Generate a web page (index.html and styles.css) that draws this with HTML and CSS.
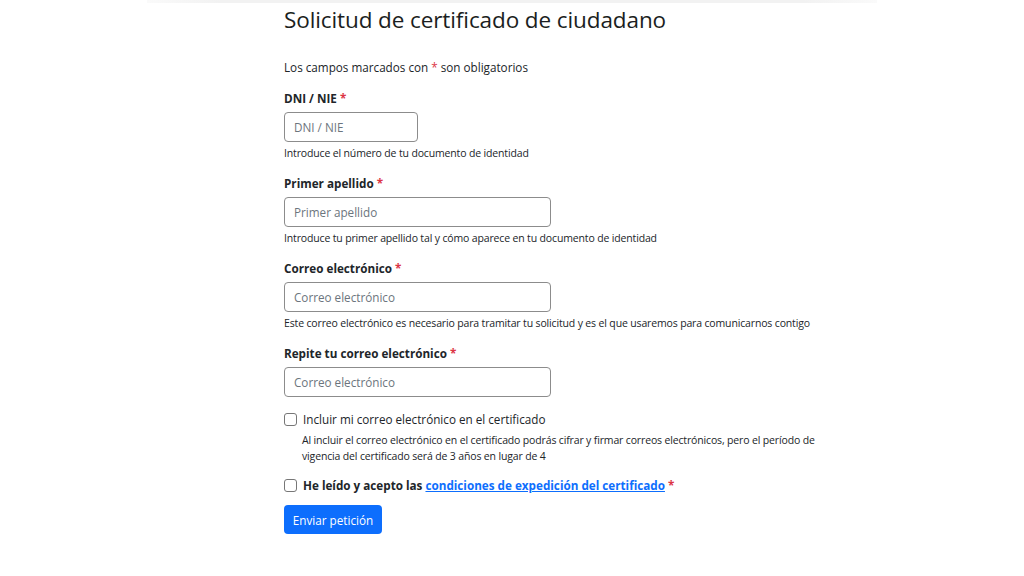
FILE: index.html
```html
<!DOCTYPE html>
<html lang="es">
<head>
  <meta charset="UTF-8" />
  <meta name="viewport" content="width=device-width, initial-scale=1.0">
  <title>Solicitud de certificado de ciudadano</title>
  <link rel="stylesheet" href="styles.css">
</head>
<body>

  <div class="top-band"></div>

  <div class="container">
    <div class="form-wrap">
      <h1>Solicitud de certificado de ciudadano</h1>

      <p class="required-note">Los campos marcados con <span class="star">*</span> son obligatorios</p>

      <!-- DNI -->
      <div class="field">
        <label for="dni">DNI / NIE <span class="star">*</span></label>
        <input type="text" id="dni" class="input-short" placeholder="DNI / NIE" />
        <div class="help">Introduce el número de tu documento de identidad</div>
      </div>

      <!-- Apellido -->
      <div class="field">
        <label for="apellido">Primer apellido <span class="star">*</span></label>
        <input type="text" id="apellido" placeholder="Primer apellido" />
        <div class="help">Introduce tu primer apellido tal y cómo aparece en tu documento de identidad</div>
      </div>

      <!-- Correo -->
      <div class="field">
        <label for="email">Correo electrónico <span class="star">*</span></label>
        <input type="email" id="email" placeholder="Correo electrónico" />
        <div class="help">Este correo electrónico es necesario para tramitar tu solicitud y es el que usaremos para comunicarnos contigo</div>
      </div>

      <div class="field">
        <label for="email2">Repite tu correo electrónico <span class="star">*</span></label>
        <input type="email" id="email2" placeholder="Correo electrónico" />
      </div>

      <!-- Casillas -->
      <div class="check">
        <input type="checkbox" id="incluir" />
        <label for="incluir">Incluir mi correo electrónico en el certificado</label>
      </div>
      <div class="check-help">
        Al incluir el correo electrónico en el certificado podrás cifrar y firmar correos electrónicos, pero el período de
        vigencia del certificado será de 3 años en lugar de 4
      </div>

      <div class="check check-bold">
        <input type="checkbox" id="acepto" />
        <label for="acepto">He leído y acepto las <a href="#">condiciones de expedición del certificado</a> <span class="star">*</span></label>
      </div>

      <button type="submit" class="btn-send">Enviar petición</button>
    </div>
  </div>

</body>
</html>
```

FILE: styles.css
```css
* {
  box-sizing: border-box;
}

body {
  margin: 0;
  font-family: "Open Sans", "Noto Sans", sans-serif;
  font-size: 11.7px;
  color: #212529;
  background-color: #fff;
}

.top-band {
  width: 730px;
  height: 3px;
  margin: 0 auto;
  background: linear-gradient(to right, #fafafa, #f2f2f2 10%, #f2f2f2 90%, #fafafa);
}

.container {
  width: 730px;
  margin: 0 auto;
}

.form-wrap {
  margin-left: 137px;
  width: 560px;
}

h1 {
  margin: 2px 0 0;
  font-size: 22.5px;
  font-weight: 500;
  line-height: 30px;
  letter-spacing: -0.1px;
  color: #1b1e21;
}

.required-note {
  margin: 23px 0 13px;
  line-height: 18px;
}

.star {
  color: #dc3545;
}

.field {
  margin-bottom: 13px;
}

.field label {
  display: block;
  font-weight: 700;
  line-height: 18px;
  margin-bottom: 5px;
}

input[type="text"],
input[type="email"] {
  display: block;
  width: 267px;
  height: 30px;
  padding: 0 9px;
  border: 1px solid #8c8c8c;
  border-radius: 4px;
  font-family: inherit;
  font-size: 11.7px;
  color: #212529;
}

input::placeholder {
  color: #6c757d;
}

.input-short {
  width: 134px !important;
}

.help {
  margin-top: 3px;
  font-size: 10.5px;
  line-height: 16px;
  letter-spacing: -0.15px;
}

.check {
  display: flex;
  align-items: center;
  gap: 6px;
  line-height: 18px;
}

input[type="checkbox"] {
  appearance: none;
  width: 13px;
  height: 13px;
  margin: 0;
  border: 1px solid #777;
  border-radius: 3px;
  background-color: #fff;
}

.check-help {
  margin: 4px 0 12px 18px;
  width: 540px;
  font-size: 10.5px;
  line-height: 16px;
  letter-spacing: -0.15px;
}

.check-bold label {
  font-weight: 700;
}

.check-bold a {
  color: #0d6efd;
  text-decoration: underline;
}

.btn-send {
  display: block;
  margin-top: 11px;
  width: 98px;
  height: 29px;
  padding: 0;
  border: none;
  border-radius: 4px;
  background-color: #0d6efd;
  color: #fff;
  font-family: inherit;
  font-size: 11.7px;
  cursor: pointer;
}
```
